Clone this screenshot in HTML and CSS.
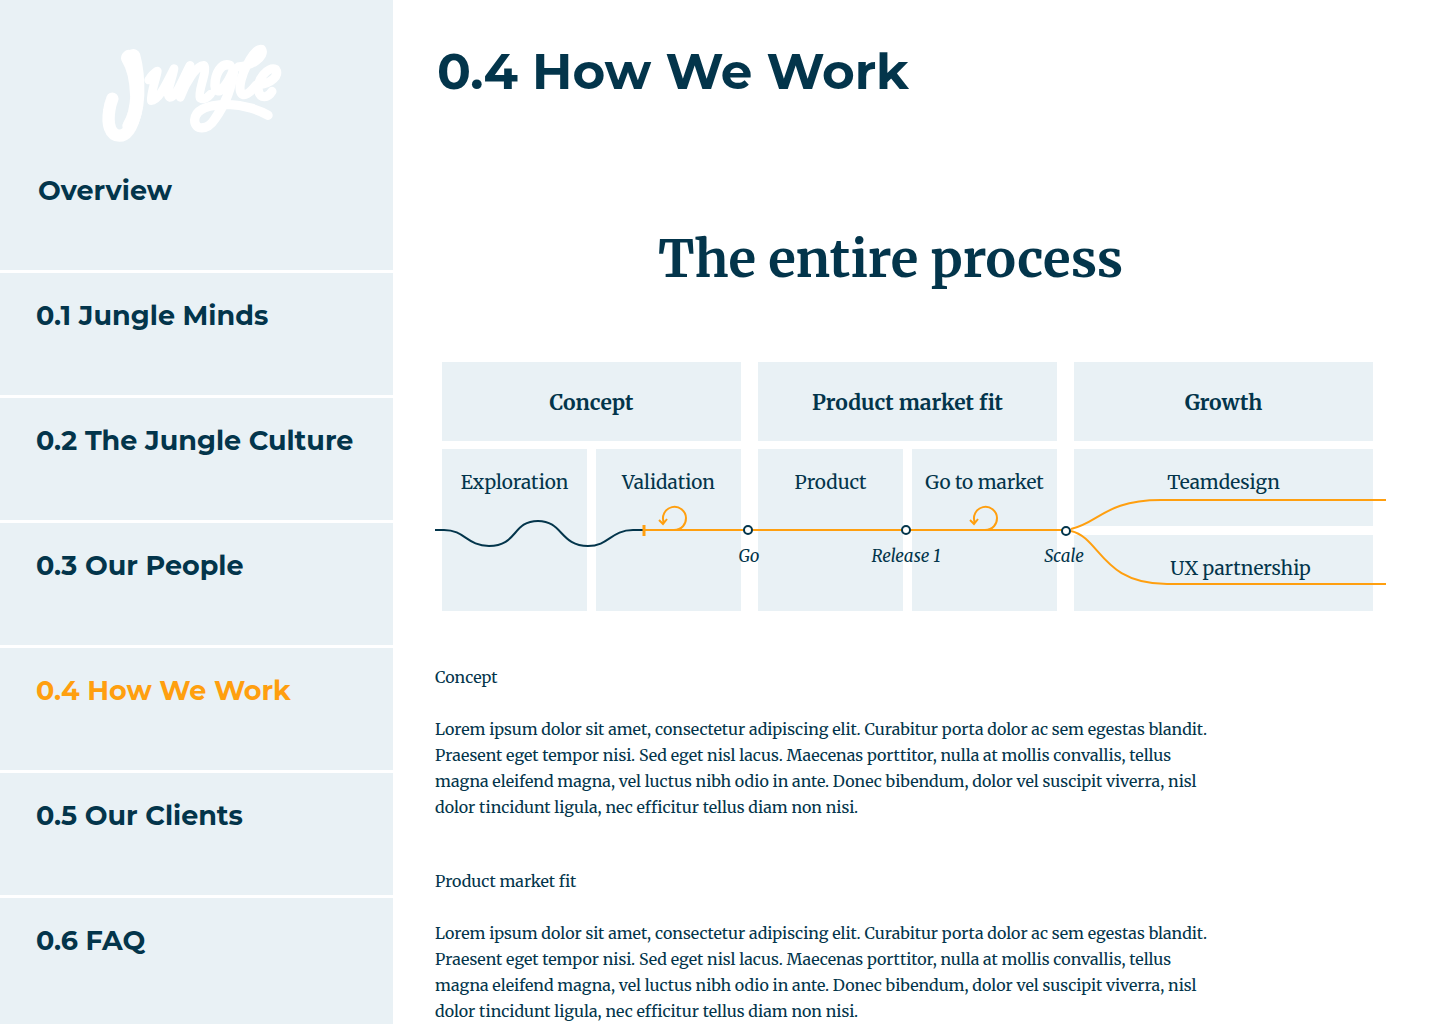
FILE: index.html
```html
<!DOCTYPE html>
<html lang="en">
<head>
<meta charset="utf-8">
<meta name="viewport" content="width=device-width, initial-scale=1">
<title>0.4 How We Work – Jungle</title>
<link rel="stylesheet" href="styles.css">
</head>
<body>
<div class="layout">
  <aside class="sidebar">
    <a class="logo" href="#" aria-label="Jungle">
      <svg class="logo-mark" viewBox="0 0 630 375" aria-hidden="true">
        <path stroke-width="37" d="M116 78C137 118 146 190 138 240C128 290 112 317 88 317C60 317 51 282 58 240C60 226 63 216 67 206"/>
        <path stroke-width="42" d="M114 84L130 78C139 110 143 160 142 195C140 236 132 266 118 288M114 84C134 116 140 160 141 195"/>
        <path stroke-width="26" d="M176 150C183 139 191 130 202 123C198 148 182 188 184 212C208 212 234 150 252 116C246 150 226 192 239 202C258 204 282 138 300 106C292 136 276 176 271 202C286 160 320 104 342 106C354 120 322 186 330 204C342 210 352 204 362 192"/>
        <path stroke-width="28" d="M420 106C394 96 374 132 375 168C380 204 412 168 432 116C426 170 404 226 374 268C352 302 314 302 314 270C316 234 364 224 414 223C462 225 508 240 534 256"/>
        <path stroke-width="27" d="M446 110C482 110 528 78 515 58C492 50 440 150 452 186C460 206 482 186 498 166"/>
        <path stroke-width="27" d="M508 164C544 160 570 136 557 118C534 108 498 150 505 182C512 208 534 204 546 184"/>
      </svg>
    </a>
    <nav class="menu">
      <a class="menu-item" href="#">Overview</a>
      <a class="menu-item" href="#">0.1 Jungle Minds</a>
      <a class="menu-item" href="#">0.2 The Jungle Culture</a>
      <a class="menu-item" href="#">0.3 Our People</a>
      <a class="menu-item menu-item-active" href="#" aria-current="page">0.4 How We Work</a>
      <a class="menu-item" href="#">0.5 Our Clients</a>
      <a class="menu-item" href="#">0.6 FAQ</a>
    </nav>
  </aside>

  <main class="content">
    <h1 class="page-title">0.4 How We Work</h1>
    <h2 class="section-title">The entire process</h2>

    <div class="process">
      <div class="phases">
        <section class="phase">
          <h3 class="phase-title">Concept</h3>
          <div class="steps">
            <p class="step">Exploration</p>
            <p class="step">Validation</p>
          </div>
        </section>
        <section class="phase">
          <h3 class="phase-title">Product market fit</h3>
          <div class="steps">
            <p class="step">Product</p>
            <p class="step">Go to market</p>
          </div>
        </section>
        <section class="phase">
          <h3 class="phase-title">Growth</h3>
          <div class="steps steps-stacked">
            <p class="step">Teamdesign</p>
            <p class="step step-inset">UX partnership</p>
          </div>
        </section>
      </div>
      <svg class="track" viewBox="0 0 951 249" aria-hidden="true">
        <path class="track-explore" d="M0 168H9C30 168 32 184 54 184C83 184 77 159 103 159C128 159 125 184 153 184C174 184 176 168 198 168H209"/>
        <path class="track-main" d="M209 168H630"/>
        <path class="track-main" d="M636 167C664 161 670 138 726 138H951M636 169C666 176 666 222 732 222H951"/>
        <path class="track-tick" d="M209 163V174"/>
        <g class="track-loop">
          <path d="M239 168C247 168 251 162 251 156A11.500 11.500 0 1 0 229 161M224 158L228 162L232 157"/>
          <path d="M550 168C558 168 562 162 562 156A11.500 11.500 0 1 0 540 161M535 158L539 162L543 157"/>
        </g>
        <g class="track-stop">
          <circle cx="313" cy="168" r="4"/>
          <circle cx="471" cy="168" r="4"/>
          <circle cx="631" cy="169" r="4"/>
        </g>
        <g class="track-label">
          <text x="314" y="200">Go</text>
          <text x="471" y="200">Release 1</text>
          <text x="629" y="200">Scale</text>
        </g>
      </svg>
    </div>

    <section class="article">
      <h3 class="article-title">Concept</h3>
      <p class="article-text">Lorem ipsum dolor sit amet, consectetur adipiscing elit. Curabitur porta dolor ac sem egestas blandit. Praesent eget tempor nisi. Sed eget nisl lacus. Maecenas porttitor, nulla at mollis convallis, tellus magna eleifend magna, vel luctus nibh odio in ante. Donec bibendum, dolor vel suscipit viverra, nisl dolor tincidunt ligula, nec efficitur tellus diam non nisi.</p>
    </section>
    <section class="article">
      <h3 class="article-title">Product market fit</h3>
      <p class="article-text">Lorem ipsum dolor sit amet, consectetur adipiscing elit. Curabitur porta dolor ac sem egestas blandit. Praesent eget tempor nisi. Sed eget nisl lacus. Maecenas porttitor, nulla at mollis convallis, tellus magna eleifend magna, vel luctus nibh odio in ante. Donec bibendum, dolor vel suscipit viverra, nisl dolor tincidunt ligula, nec efficitur tellus diam non nisi.</p>
    </section>
  </main>
</div>
</body>
</html>
```
FILE: styles.css
```css
:root {
  --navy: #03354b;
  --orange: #ff9f0f;
  --mist: #e9f1f5;
  --serif: Merriweather, "DejaVu Serif Condensed", "DejaVu Serif", serif;
  --round: "Gotham Rounded", Montserrat, Inter, sans-serif;
}

* {
  box-sizing: border-box;
}

body,
h1,
h2,
h3,
p {
  margin: 0;
}

body {
  background: #fff;
  color: var(--navy);
  font-family: var(--serif);
}

.layout {
  display: flex;
  min-height: 100vh;
}

/* Sidebar */
.sidebar {
  flex: 0 0 393px;
  background: var(--mist);
}

.logo {
  display: block;
  padding: 30px 90px 0;
}

.logo-mark {
  display: block;
  width: 210px;
  fill: none;
  stroke: #fff;
  stroke-linecap: round;
  stroke-linejoin: round;
}

.menu {
  display: flex;
  flex-direction: column;
}

.menu-item {
  height: 125px;
  padding: 25px 24px 0 36px;
  border-top: 3px solid #fff;
  color: var(--navy);
  font: 700 27px/36px var(--round);
  text-decoration: none;
}

.menu-item:first-child {
  height: 115px;
  padding: 18px 24px 0 38px;
  border-top: 0;
}

.menu-item-active {
  color: var(--orange);
}

/* Content */
.content {
  flex: 1;
  min-width: 0;
  padding: 40px 54px 0 42px;
}

.page-title {
  padding-left: 2px;
  font: 700 50px/64px var(--round);
}

.section-title {
  margin: 120px 40px 68px 0;
  font-size: 51px;
  font-weight: 700;
  line-height: 70px;
  text-align: center;
}

/* Process diagram */
.process {
  position: relative;
  aspect-ratio: 951 / 249;
  margin-bottom: 53px;
}

.phases {
  display: grid;
  grid-template-columns: repeat(3, 1fr);
  gap: 17px;
  height: 100%;
  padding: 0 13px 0 7px;
}

.phase {
  display: grid;
  grid-template-rows: 79fr 162fr;
  gap: 8px;
}

.phase-title {
  display: grid;
  place-items: center;
  padding-top: 2px;
  background: var(--mist);
  font-size: 21px;
  line-height: 28px;
}

.steps {
  display: grid;
  grid-template-columns: 1fr 1fr;
  gap: 9px;
}

.steps-stacked {
  grid-template-columns: 1fr;
  grid-template-rows: 1fr 1fr;
}

.step {
  padding-top: 19px;
  background: var(--mist);
  font-size: 19px;
  line-height: 28px;
  text-align: center;
}

.step-inset {
  padding-left: 34px;
}

.track {
  position: absolute;
  inset: 0;
  width: 100%;
  height: 100%;
  overflow: visible;
  fill: none;
}

.track-explore {
  stroke: var(--navy);
  stroke-width: 2;
}

.track-main,
.track-loop {
  stroke: var(--orange);
  stroke-width: 2;
}

.track-tick {
  stroke: var(--orange);
  stroke-width: 3;
}

.track-stop {
  fill: #fff;
  stroke: var(--navy);
  stroke-width: 2;
}

.track-label {
  fill: var(--navy);
  font-size: 17px;
  font-style: italic;
  text-anchor: middle;
}

/* Articles */
.article {
  max-width: 790px;
  margin-bottom: 48px;
  font-size: 16px;
  line-height: 26px;
}

.article:last-child {
  margin-bottom: 0;
}

.article-title {
  margin-bottom: 26px;
  font-size: 16px;
  font-weight: 400;
}
```
